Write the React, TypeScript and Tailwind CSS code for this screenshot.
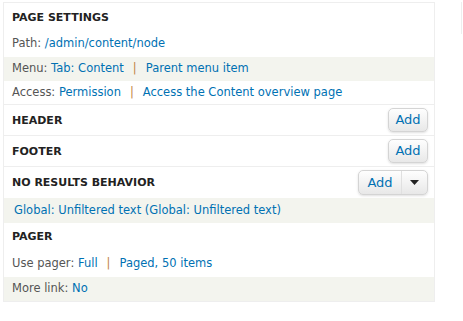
import React from 'react';

const font = { fontFamily: '"DejaVu Sans", Verdana, sans-serif' };

const Sep = () => <span className="mx-[9px] text-[#c28544]">|</span>;

const Link: React.FC<{ children: React.ReactNode }> = ({ children }) => (
  <a className="text-[#0071b3] cursor-pointer">{children}</a>
);

const AddButton = () => (
  <button className="h-[24px] w-[40px] rounded-[5px] border border-[#d4d4d4] bg-gradient-to-b from-[#fefefe] to-[#e8e8e8] text-[13px] text-[#0071b3] shadow-sm">
    Add
  </button>
);

const AddDrop = () => (
  <div className="flex h-[25px] w-[70px] rounded-[5px] border border-[#d4d4d4] bg-gradient-to-b from-[#fefefe] to-[#e8e8e8] shadow-sm">
    <span className="flex w-[43px] items-center justify-center border-r border-[#e0e0e0] text-[13px] text-[#0071b3]">Add</span>
    <span className="flex flex-1 items-center justify-center">
      <svg width="9" height="5" viewBox="0 0 9 5"><path d="M0 0h9L4.5 5z" fill="#222" /></svg>
    </span>
  </div>
);

const Heading: React.FC<{ title: string; action?: React.ReactNode; h: string }> = ({ title, action, h }) => (
  <div className={`flex items-center justify-between border-b border-[#eee] pl-[8px] pr-[6px] ${h}`}>
    <h3 className="pt-[2px] text-[11px] font-bold uppercase text-[#222]">{title}</h3>
    {action}
  </div>
);

export default function App() {
  return (
    <div className="flex min-h-[321px] bg-white pt-[2px] pl-[3px] text-[11.5px] text-[#555]" style={font}>
      <div className="w-[432px] self-start border border-[#eee]">
        <div className="flex h-[28px] items-center pl-[8px] pt-[2px]">
          <h3 className="text-[11px] font-bold text-[#222]">PAGE SETTINGS</h3>
        </div>
        <div className="flex h-[26px] items-center pl-[8px]">
          Path:&nbsp; <Link>/admin/content/node</Link>
        </div>
        <div className="flex h-[24px] items-center bg-[#f3f4ee] pl-[8px]">
          Menu:&nbsp;<Link>Tab: Content</Link>
          <Sep />
          <Link>Parent menu item</Link>
        </div>
        <div className="flex h-[24px] items-center border-b border-[#eee] pl-[8px]">
          Access:&nbsp;<Link>Permission</Link>
          <Sep />
          <Link>Access the Content overview page</Link>
        </div>
        <Heading title="HEADER" h="h-[31px]" action={<AddButton />} />
        <Heading title="FOOTER" h="h-[31px]" action={<AddButton />} />
        <div className="flex h-[31px] items-center justify-between pl-[8px] pr-[6px]">
          <h3 className="pt-[2px] text-[11px] font-bold text-[#222]">NO RESULTS BEHAVIOR</h3>
          <AddDrop />
        </div>
        <div className="flex h-[25px] items-center bg-[#f3f4ee] pl-[10px]">
          <Link>Global: Unfiltered text (Global: Unfiltered text)</Link>
        </div>
        <div className="flex h-[28px] items-center pl-[8px]">
          <h3 className="text-[11px] font-bold text-[#222]">PAGER</h3>
        </div>
        <div className="flex h-[26px] items-center pl-[8px]">
          Use pager:&nbsp; <Link>Full</Link>
          <Sep />
          <Link>Paged, 50 items</Link>
        </div>
        <div className="flex h-[24px] items-center bg-[#f3f4ee] pl-[8px]">
          More link:&nbsp; <Link>No</Link>
        </div>
      </div>
      <div className="ml-auto mr-[1px] h-[32px] w-px bg-[#eee]" />
    </div>
  );
}
